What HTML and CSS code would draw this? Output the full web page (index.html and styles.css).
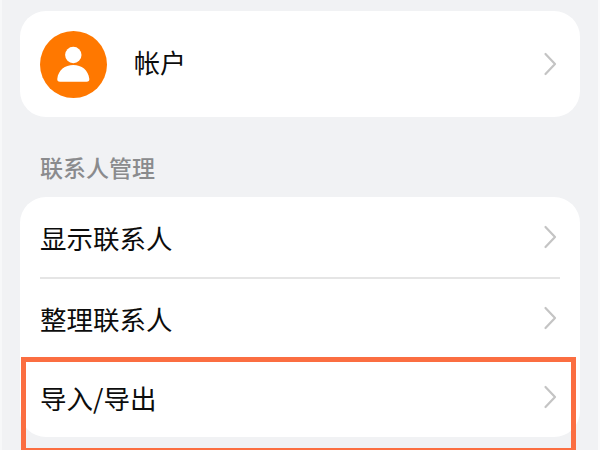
FILE: index.html
```html
<!DOCTYPE html>
<html lang="zh-CN">
<head>
<meta charset="utf-8">
<title>联系人设置</title>
<link rel="stylesheet" href="styles.css">
</head>
<body>
<main class="page">
  <section class="card account">
    <svg class="avatar" viewBox="0 0 67 67" aria-hidden="true">
      <circle class="avatar-bg" cx="33.5" cy="33.5" r="33.5"/>
      <circle class="avatar-fg" cx="33.3" cy="24" r="8.2"/>
      <path class="avatar-fg" d="M20 50.700c-2 0-3-1-2.700-3C18.300 39 25 34 33.300 34s15 5 16 13.700c.3 2-.7 3-2.700 3z"/>
    </svg>
    <span class="account-name">帐户</span>
    <svg class="chevron" viewBox="0 0 14 24" aria-hidden="true"><path d="M2.500 2l9.500 10-9.500 10"/></svg>
  </section>
  <h2 class="section-label">联系人管理</h2>
  <section class="card list">
    <div class="row row-first">
      <span class="row-text">显示联系人</span>
      <svg class="chevron" viewBox="0 0 14 24" aria-hidden="true"><path d="M2.500 2l9.500 10-9.500 10"/></svg>
    </div>
    <div class="row row-second">
      <span class="row-text">整理联系人</span>
      <svg class="chevron" viewBox="0 0 14 24" aria-hidden="true"><path d="M2.500 2l9.500 10-9.500 10"/></svg>
    </div>
    <div class="row row-third">
      <span class="row-text">导入/导出</span>
      <svg class="chevron" viewBox="0 0 14 24" aria-hidden="true"><path d="M2.500 2l9.500 10-9.500 10"/></svg>
    </div>
  </section>
  <div class="highlight"></div>
</main>
</body>
</html>
```

FILE: styles.css
```css
* {
  box-sizing: border-box;
}

html,
body {
  margin: 0;
  height: 100%;
  overflow: hidden;
}

body {
  background: #f1f2f4;
  font-family: "Noto Sans CJK SC", "Liberation Sans", sans-serif;
  color: #0c0c0c;
}

.page {
  position: relative;
  width: 600px;
  height: 450px;
  padding: 11px 20px 0;
  overflow: hidden;
  box-shadow: inset 2px 0 #f7f8f9, inset -2px 0 #fafafb;
}

.card {
  background: #fff;
  border-radius: 26px;
}

.account {
  height: 106px;
  display: flex;
  align-items: center;
  padding: 0 20px;
}

.avatar {
  width: 67px;
  height: 67px;
  flex: none;
}

.avatar-bg {
  fill: #ff7800;
}

.avatar-fg {
  fill: #fff;
}

.account-name {
  margin-left: 27px;
  margin-bottom: 4px;
  font-size: 26px;
  line-height: 34px;
  flex: 1;
}

.chevron {
  width: 14px;
  height: 24px;
  flex: none;
  fill: none;
  stroke: #c4c4c4;
  stroke-width: 2.2;
  stroke-linecap: round;
  stroke-linejoin: round;
  margin-right: 3px;
}

.section-label {
  margin: 0;
  padding: 34px 20px 0;
  height: 80px;
  font-size: 23px;
  line-height: 32px;
  font-weight: 500;
  color: #8a8b8d;
}

.list {
  height: 240px;
  padding: 0 20px;
}

.row {
  display: flex;
  align-items: center;
  justify-content: space-between;
}

.row-first {
  height: 82px;
  border-bottom: 2px solid #e5e5e5;
}

.row-second {
  height: 78px;
}

.row-third {
  height: 79px;
}

.row-text {
  font-size: 26.500px;
  line-height: 36px;
  margin-top: 2px;
}

.highlight {
  position: absolute;
  left: 21px;
  top: 357px;
  width: 555px;
  height: 96px;
  border: 5px solid #fb6e41;
}
```
